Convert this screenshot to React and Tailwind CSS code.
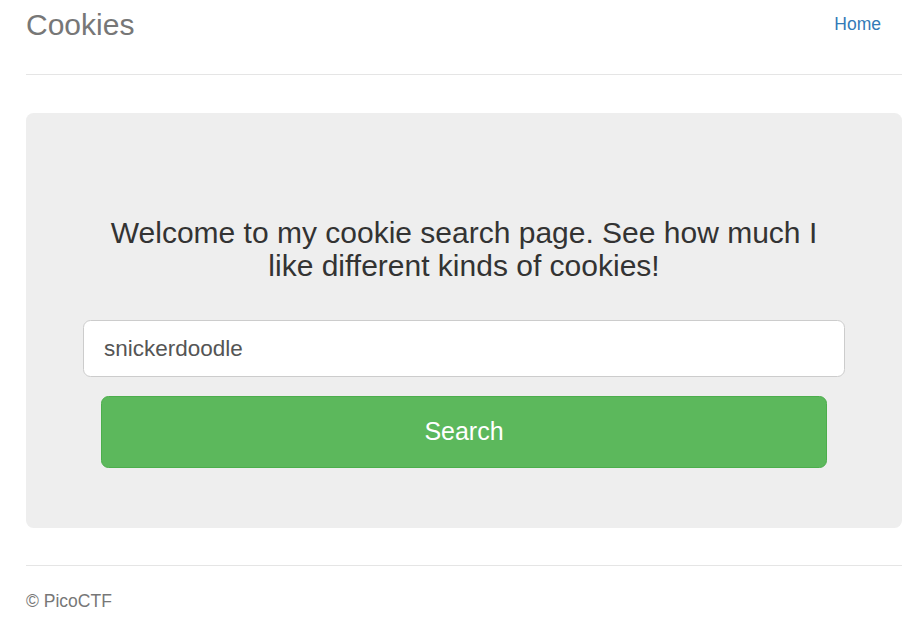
import React from "react";

export default function App() {
  return (
    <div className="min-h-[617px] bg-white" style={{ fontFamily: '"Liberation Sans", Arial, sans-serif' }}>
      <div className="ml-[26px] w-[876px]">
        <div className="flex h-[75px] items-start justify-between border-b border-[#e5e5e5]">
          <h3 className="m-0 text-[30px] leading-[50px] font-normal text-[#777]">Cookies</h3>
          <nav>
            <a href="#" className="block pl-[19px] pr-[21px] pt-[12px] text-[17.5px] leading-[25px] text-[#337ab7]">Home</a>
          </nav>
        </div>

        <div className="mt-[38px] rounded-[7.5px] bg-[#eee] px-[75px] pt-[103px] pb-[60px]">
          <p className="m-0 text-center text-[30px] leading-[33px] text-[#333]">
            Welcome to my cookie search page. See how much I like different kinds of cookies!
          </p>
          <div className="mx-[-18px] mt-[38px]">
            <input
              type="text"
              defaultValue="snickerdoodle"
              className="block h-[57px] w-full rounded-[7.5px] border border-[#ccc] bg-white px-[20px] text-[22.5px] text-[#555] outline-none"
            />
          </div>
          <button className="mt-[19px] flex h-[72px] w-full items-center justify-center rounded-[7.5px] border border-[#4cae4c] bg-[#5cb85c] text-[25px] text-white">
            Search
          </button>
        </div>

        <footer className="mt-[37px] border-t border-[#e5e5e5] pt-[23px]">
          <p className="m-0 text-[17.5px] leading-[25px] text-[#777]">© PicoCTF</p>
        </footer>
      </div>
    </div>
  );
}
